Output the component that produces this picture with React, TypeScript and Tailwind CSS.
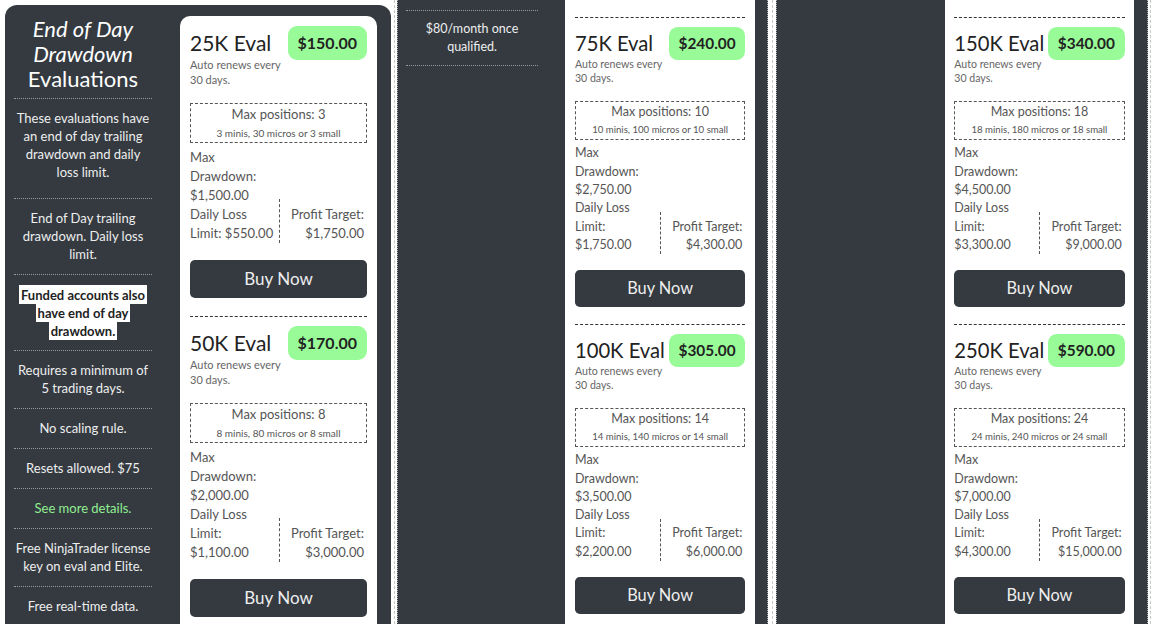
import React from "react";

type Plan = {
  name: string;
  price: string;
  pos: number;
  dd: string;
  dll: string;
  pt: string;
};

const plans: Record<string, Plan> = {
  p25: { name: "25K Eval", price: "$150.00", pos: 3, dd: "$1,500.00", dll: "$550.00", pt: "$1,750.00" },
  p50: { name: "50K Eval", price: "$170.00", pos: 8, dd: "$2,000.00", dll: "$1,100.00", pt: "$3,000.00" },
  p75: { name: "75K Eval", price: "$240.00", pos: 10, dd: "$2,750.00", dll: "$1,750.00", pt: "$4,300.00" },
  p100: { name: "100K Eval", price: "$305.00", pos: 14, dd: "$3,500.00", dll: "$2,200.00", pt: "$6,000.00" },
  p150: { name: "150K Eval", price: "$340.00", pos: 18, dd: "$4,500.00", dll: "$3,300.00", pt: "$9,000.00" },
  p250: { name: "250K Eval", price: "$590.00", pos: 24, dd: "$7,000.00", dll: "$4,300.00", pt: "$15,000.00" },
};

function PlanBlock({ plan, sep }: { plan: Plan; sep?: boolean }) {
  return (
    <div className={sep ? "mt-[18px] border-t border-dashed border-[#333] pt-[9px]" : ""}>
      <div className="flex items-start gap-1">
        <div className="min-w-0 flex-1 pt-[3px]">
          <div className="whitespace-nowrap text-[21px] leading-[28px] text-[#222]">{plan.name}</div>
          <div className="text-[11px] leading-[15px] text-[#666]">Auto renews every 30 days.</div>
        </div>
        <div className="shrink-0 rounded-[9px] bg-[#98fb98] px-[10px] py-[6px] text-[16px] font-bold leading-[22px] text-[#222]">
          {plan.price}
        </div>
      </div>

      <div className="mt-[16px] border border-dashed border-[#555] text-center text-[#555]">
        <div className="text-[13px] leading-[20px]">Max positions: {plan.pos}</div>
        <div className="text-[10px] leading-[18px]">
          {plan.pos} minis, {plan.pos * 10} micros or {plan.pos} small
        </div>
      </div>

      <div className="mt-[5px] grid grid-cols-2 items-end text-[13px] leading-[19px] text-[#555]">
        <div className="pr-[4px]">
          <div>Max Drawdown: {plan.dd}</div>
          <div>Daily Loss Limit: {plan.dll}</div>
        </div>
        <div className="border-l border-dashed border-[#555] pr-[3px] pt-[6px] text-right">
          <div>Profit Target:</div>
          <div>{plan.pt}</div>
        </div>
      </div>

      <button className="mt-[17px] flex h-[38px] w-full items-center justify-center rounded-[5px] bg-[#343a40] text-[17px] text-[#eee]">
        Buy Now
      </button>
    </div>
  );
}

function SideItem({ children, pb = "pb-[11px]" }: { children: React.ReactNode; pb?: string }) {
  return (
    <div className={`border-b border-dotted border-[#999] pt-[10px] text-center text-[13px] leading-[18px] text-[#eee] ${pb}`}>
      {children}
    </div>
  );
}

function Gap({ w }: { w: string }) {
  return (
    <div className={`flex shrink-0 justify-center ${w}`}>
      <div className="h-full border-l border-dashed border-[#c8c8c8]" />
    </div>
  );
}

export default function App() {
  return (
    <div className="flex h-[624px] w-[1160px] overflow-hidden bg-white [font-family:Lato,sans-serif]">
      {/* first screen */}
      <div className="ml-[5px] mt-[5px] flex w-[386px] shrink-0 self-start rounded-t-[12px] bg-[#343a40] pl-[9px] pr-[14px] pt-[11px]">
        <div className="w-[138px] shrink-0">
          <div className="border-b border-dotted border-[#999] pb-[7px] text-center text-[22px] leading-[25px] text-white">
            <div className="italic">End of Day</div>
            <div className="italic">Drawdown</div>
            <div>Evaluations</div>
          </div>
          <SideItem pb="pb-[17px]">These evaluations have an end of day trailing drawdown and daily loss limit.</SideItem>
          <SideItem>End of Day trailing drawdown. Daily loss limit.</SideItem>
          <SideItem>
            <span className="box-decoration-clone bg-white px-[2px] py-[1.5px] font-bold text-[#222]">
              Funded accounts also have end of day drawdown.
            </span>
          </SideItem>
          <SideItem>Requires a minimum of 5 trading days.</SideItem>
          <SideItem>No scaling rule.</SideItem>
          <SideItem>Resets allowed. $75</SideItem>
          <SideItem>
            <span className="text-[#90ee90]">See more details.</span>
          </SideItem>
          <SideItem>Free NinjaTrader license key on eval and Elite.</SideItem>
          <SideItem>Free real-time data.</SideItem>
        </div>
        <div className="ml-[28px] w-[197px] shrink-0 rounded-t-[10px] bg-white px-[10px] pt-[10px]">
          <PlanBlock plan={plans.p25} />
          <PlanBlock plan={plans.p50} sep />
        </div>
      </div>

      <Gap w="w-[6px]" />

      {/* second screen, scrolled */}
      <div className="shrink-0 [zoom:0.962]">
        <div className="flex h-[660px] w-[386px] border-x border-dotted border-[#aaa] bg-[#343a40] pl-[8px] pr-[13px]">
          <div className="w-[138px] shrink-0 pt-[10px]">
            <div className="border-t border-dotted border-[#999]">
              <SideItem>$80/month once qualified.</SideItem>
            </div>
          </div>
          <div className="ml-[28px] w-[197px] shrink-0 bg-white px-[10px]">
            <PlanBlock plan={plans.p75} sep />
            <PlanBlock plan={plans.p100} sep />
          </div>
        </div>
      </div>

      <Gap w="w-[8px]" />

      {/* third screen, scrolled further */}
      <div className="shrink-0 [zoom:0.962]">
        <div className="flex h-[660px] w-[386px] border-x border-dotted border-[#aaa] bg-[#343a40] pl-[8px] pr-[13px]">
          <div className="w-[138px] shrink-0" />
          <div className="ml-[28px] w-[197px] shrink-0 bg-white px-[10px]">
            <PlanBlock plan={plans.p150} sep />
            <PlanBlock plan={plans.p250} sep />
          </div>
        </div>
      </div>

      <Gap w="w-[6px]" />
    </div>
  );
}
